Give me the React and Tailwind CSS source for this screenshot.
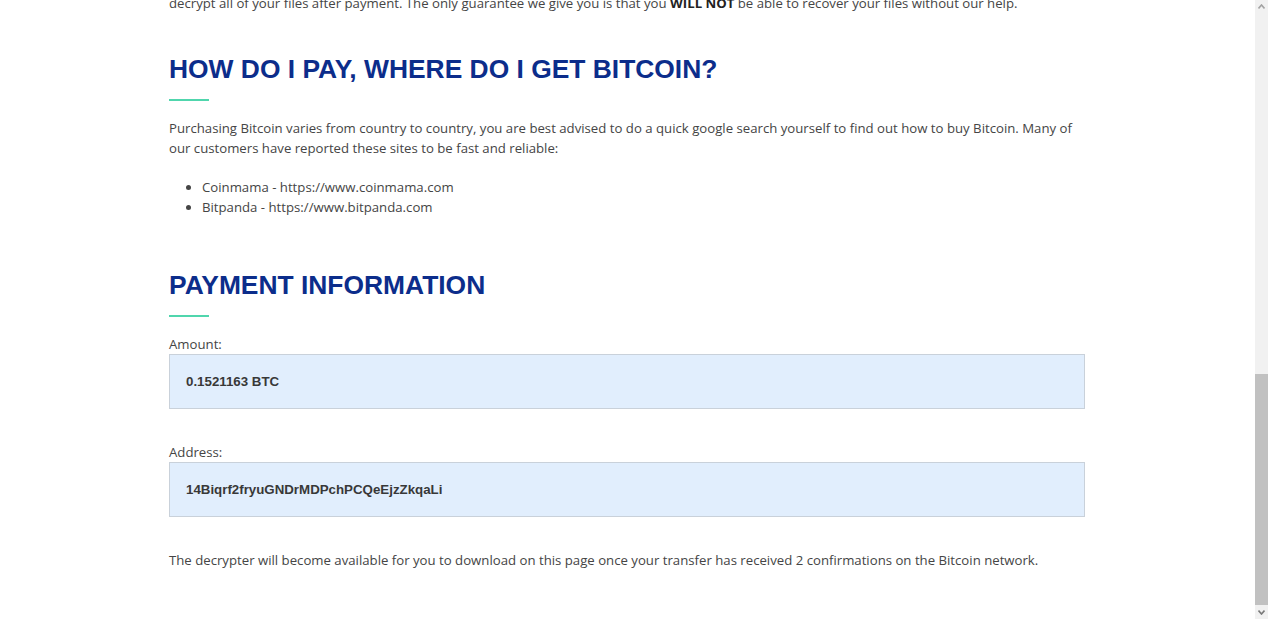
import React from 'react';

// Section heading with the short green rule under it
const SectionTitle = ({ children }) => (
  <div>
    <h2 className="font-['Liberation_Sans',Arial,sans-serif] text-[26.4px] leading-[32px] font-bold text-[#0c2d8b]">
      {children}
    </h2>
    <div className="mt-[14px] h-[2px] w-[40px] bg-[#50d6ad]" />
  </div>
);

const InfoBox = ({ label, value }) => (
  <div>
    <div className="leading-[20px]">{label}</div>
    <div className="flex h-[55px] items-center border border-[#c9d1da] bg-[#e1eefd] px-[16px] font-['Liberation_Sans',Arial,sans-serif] text-[13.3px] font-bold text-[#383838]">
      {value}
    </div>
  </div>
);

const FakeScrollbar = () => (
  <div className="flex w-[13px] shrink-0 flex-col bg-[#f1f1f1]">
    <div className="flex h-[13px] items-center justify-center">
      <svg width="7" height="5" viewBox="0 0 7 5">
        <path d="M0.5 4.5 L3.5 1 L6.5 4.5" fill="none" stroke="#a3a3a3" strokeWidth="1.6" />
      </svg>
    </div>
    <div className="flex-1" />
    <div className="h-[231px] bg-[#c1c1c1]" />
    <div className="flex h-[14px] items-center justify-center">
      <svg width="7" height="5" viewBox="0 0 7 5">
        <path d="M0.5 0.5 L3.5 4 L6.5 0.5" fill="none" stroke="#7a7a7a" strokeWidth="1.6" />
      </svg>
    </div>
  </div>
);

export default function App() {
  return (
    <div className="flex h-[619px] overflow-hidden bg-white">
      <div className="flex-1 overflow-hidden pl-[169px]">
        <div className="-mt-[7px] w-[916px] font-['Open_Sans',sans-serif] text-[13.2px] leading-[20px] text-[#454545]">
          <p>
            decrypt all of your files after payment. The only guarantee we give you is that you{' '}
            <b className="font-bold text-[#222]">WILL NOT</b> be able to recover your files without our help.
          </p>

          <div className="mt-[40px]">
            <SectionTitle>HOW DO I PAY, WHERE DO I GET BITCOIN?</SectionTitle>
          </div>

          <p className="mt-[17px]">
            Purchasing Bitcoin varies from country to country, you are best advised to do a quick google search
            yourself to find out how to buy Bitcoin. Many of our customers have reported these sites to be fast and
            reliable:
          </p>

          <ul className="mt-[19px] list-disc pl-[33px]">
            <li>Coinmama - https://www.coinmama.com</li>
            <li>Bitpanda - https://www.bitpanda.com</li>
          </ul>

          <div className="mt-[52px]">
            <SectionTitle>PAYMENT INFORMATION</SectionTitle>
          </div>

          <div className="mt-[17px]">
            <InfoBox label="Amount:" value="0.1521163 BTC" />
          </div>

          <div className="mt-[33px]">
            <InfoBox label="Address:" value="14Biqrf2fryuGNDrMDPchPCQeEjzZkqaLi" />
          </div>

          <p className="mt-[33px]">
            The decrypter will become available for you to download on this page once your transfer has received 2
            confirmations on the Bitcoin network.
          </p>
        </div>
      </div>
      <FakeScrollbar />
    </div>
  );
}
